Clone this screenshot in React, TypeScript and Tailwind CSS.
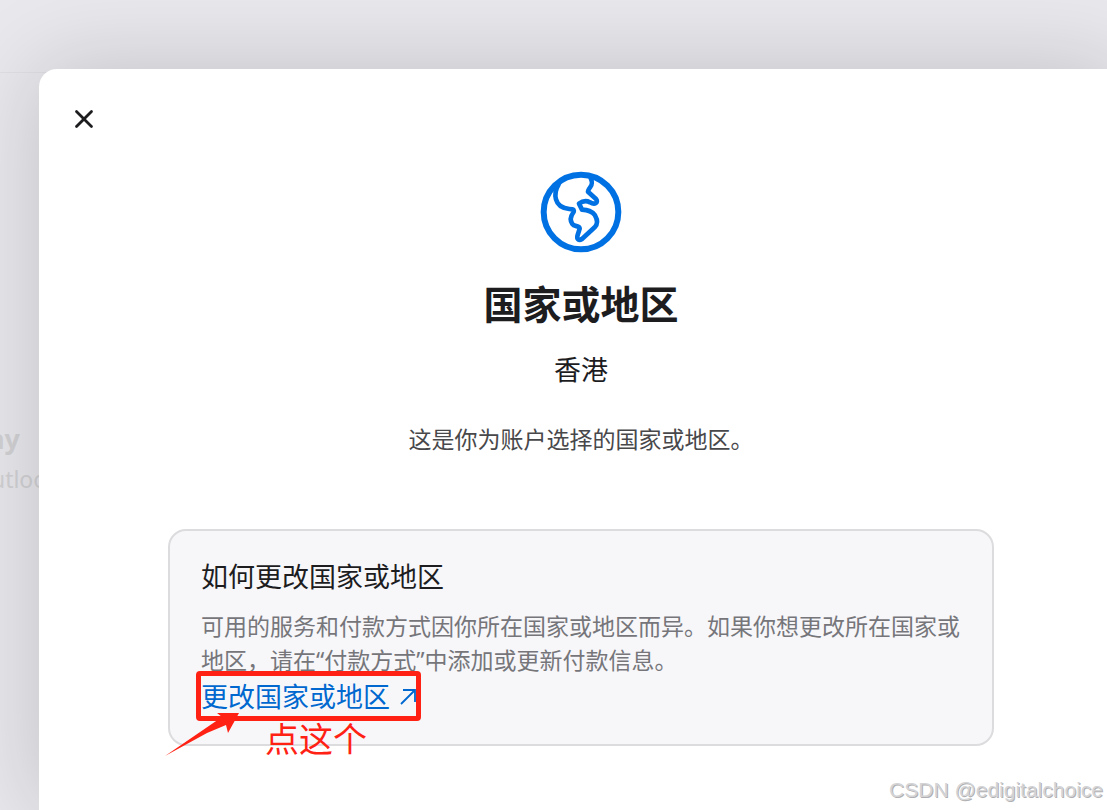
import { X } from 'lucide-react';

const GlobeIcon = () => (
  <svg
    aria-hidden="true"
    className="size-[82px] text-[#0071e3]"
    fill="none"
    stroke="currentColor"
    strokeLinecap="round"
    strokeLinejoin="round"
    viewBox="61 35 246 246"
  >
    <circle cx="184" cy="158" r="112" strokeWidth="18" />
    <path
      d="M117 75C108 90 105 106 109 120C114 139 130 147 149 149L158 150Q166 152 160 161C152 172 151 183 158 194C164 203 180 198 180 208L174 227C170 239 177 246 187 239L225 204C236 193 234 182 226 168C217 154 204 152 187 151L178 133C190 124 203 125 211 129C226 138 237 129 229 119L205 97Q204 94 212 83C219 73 218 67 213 56"
      strokeWidth="14"
    />
  </svg>
);

const ExternalArrowIcon = () => (
  <svg
    aria-hidden="true"
    className="size-4"
    fill="none"
    stroke="currentColor"
    strokeWidth="1.8"
    viewBox="0 0 16 16"
  >
    <path d="M1 15L15 1M3 1H15V13" />
  </svg>
);

const AccountPage = () => (
  <div className="min-h-screen bg-[#e9e8ed]">
    <header className="h-[73px] border-[#e0dfe4] border-b" />
    <section className="mt-[346px] w-10 overflow-hidden text-[#d2d2d5]">
      <p className="flex w-5 justify-end font-bold text-[27px] leading-10">
        ay
      </p>
      <p className="-ml-[23px] text-[23px] leading-10">outlook</p>
    </section>
  </div>
);

const Annotation = () => (
  <div className="pointer-events-none absolute -top-[6px] -left-[5px] h-[50px] w-[225px] rounded-sm border-[5px] border-[#ff2113]">
    <svg
      aria-hidden="true"
      className="absolute top-[36px] -left-[36px] h-[46px] w-[76px] text-[#ff2113]"
      fill="currentColor"
      viewBox="0 0 76 46"
    >
      <path d="M0 44L57 5L52 1L74 1L63 21L61 13L42 21Z" />
    </svg>
    <span className="absolute top-[39px] left-16 whitespace-nowrap text-[#ff2113] text-[34px] leading-[48px]">
      点这个
    </span>
  </div>
);

const RegionCard = () => (
  <section className="w-full max-w-[826px] rounded-[18px] border-2 border-[#dcdcde] bg-[#f7f7fa] px-[31px] pt-[26px] pb-[27px]">
    <h2 className="text-[#1d1d1f] text-[27px] leading-10">
      如何更改国家或地区
    </h2>
    <p className="mt-3 text-[#76767a] text-[23px] leading-[34px]">
      可用的服务和付款方式因你所在国家或地区而异。如果你想更改所在国家或地区，请在“付款方式”中添加或更新付款信息。
    </p>
    <div className="relative w-fit">
      <a
        className="flex items-center gap-2.5 text-[#0068cf] text-[27px] leading-10"
        href="#payment"
      >
        更改国家或地区
        <ExternalArrowIcon />
      </a>
      <Annotation />
    </div>
  </section>
);

const CountryDialog = () => (
  <div
    aria-labelledby="country-title"
    className="-mr-4 flex grow flex-col rounded-tl-[18px] rounded-tr-[18px] bg-white shadow-[0_0_90px_4px_rgba(0,0,0,0.16)]"
    role="dialog"
  >
    <div className="px-[30px] pt-[35px]">
      <button
        aria-label="关闭"
        className="flex size-[30px] items-center justify-center text-[#1d1d1f]"
        type="button"
      >
        <X size={30} strokeWidth={2.2} />
      </button>
    </div>
    <div className="mt-[37px] flex flex-col items-center px-8">
      <GlobeIcon />
      <h1
        className="mt-[23px] font-bold text-[#1d1d1f] text-[39px] leading-[56px]"
        id="country-title"
      >
        国家或地区
      </h1>
      <p className="mt-[18px] text-[#1d1d1f] text-[27px] leading-10">香港</p>
      <p className="mt-8 mb-[73px] text-[#48484b] text-[23px] leading-[34px]">
        这是你为账户选择的国家或地区。
      </p>
      <RegionCard />
    </div>
  </div>
);

export default function App() {
  return (
    <main
      className="relative h-screen overflow-hidden font-['Noto_Sans','Noto_Sans_CJK_SC',sans-serif]"
      lang="zh-CN"
    >
      <AccountPage />
      <div className="absolute inset-0 flex pt-[69px] pl-[39px]">
        <CountryDialog />
      </div>
      <span className="absolute right-1 bottom-1 font-['Liberation_Sans',sans-serif] text-[#d4d4d6] text-[21px] leading-8 [text-shadow:1px_1px_0_#b0b0b2]">
        CSDN @edigitalchoice
      </span>
    </main>
  );
}
